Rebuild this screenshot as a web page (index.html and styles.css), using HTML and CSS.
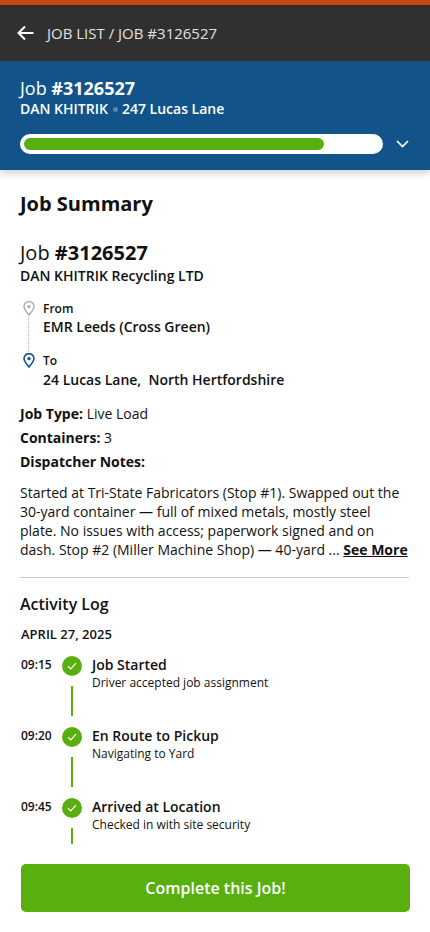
FILE: index.html
```html
<!DOCTYPE html>
<html lang="en">
<head>
<meta charset="utf-8">
<title>Job #3126527</title>
<link rel="stylesheet" href="styles.css">
</head>
<body>
<div class="page">
  <header class="topbar">
    <svg class="back" width="17" height="16" viewBox="0 0 17 16"><path d="M16.5 8H2M8 1.5 1.5 8 8 14.500" fill="none" stroke="#fff" stroke-width="2"/></svg>
    <span class="crumb">JOB LIST / JOB #3126527</span>
  </header>
  <section class="jobbar">
    <div class="jobbar-title">Job <b>#3126527</b></div>
    <div class="jobbar-sub">DAN KHITRIK<span class="dot"></span>247 Lucas Lane</div>
    <div class="progress-row">
      <div class="track"><div class="fill"></div></div>
      <svg class="chev" width="13" height="8" viewBox="0 0 13 8"><path d="M1 1 6.500 6.500 12 1" fill="none" stroke="#fff" stroke-width="1.700"/></svg>
    </div>
  </section>
  <main class="content">
    <h1 class="summary">Job Summary</h1>
    <div class="jobno">Job <b>#3126527</b></div>
    <div class="company">DAN KHITRIK Recycling LTD</div>
    <div class="route">
      <div class="stop">
        <svg class="pin" width="12" height="15" viewBox="0 0 12 15"><path d="M6 14C3.500 10.800 1 8.400 1 5.600A5 5 0 0 1 11 5.600C11 8.400 8.500 10.800 6 14Z" fill="none" stroke="#b5a9b0" stroke-width="1.400"/><circle cx="6" cy="5.600" r="1.600" fill="#b5a9b0"/></svg>
        <div class="stop-label">From</div>
        <div class="stop-name">EMR Leeds (Cross Green)</div>
        <div class="dots"></div>
      </div>
      <div class="stop last">
        <svg class="pin" width="12" height="15" viewBox="0 0 12 15"><path d="M6 14C3.500 10.800 1 8.400 1 5.600A5 5 0 0 1 11 5.600C11 8.400 8.500 10.800 6 14Z" fill="none" stroke="#12548a" stroke-width="1.600"/><circle cx="6" cy="5.600" r="1.700" fill="#12548a"/></svg>
        <div class="stop-label">To</div>
        <div class="stop-name far">24 Lucas Lane,&nbsp; North Hertfordshire</div>
      </div>
    </div>
    <div class="fact"><b>Job Type:</b> Live Load</div>
    <div class="fact"><b>Containers:</b> 3</div>
    <div class="fact"><b>Dispatcher Notes:</b></div>
    <p class="notes">Started at Tri-State Fabricators (Stop #1). Swapped out the 30-yard container — full of mixed metals, mostly steel plate. No issues with access; paperwork signed and on dash. Stop #2 (Miller Machine Shop) — 40-yard ... <a class="more">See More</a></p>
    <hr class="rule">
    <h2 class="log-title">Activity Log</h2>
    <div class="log-date">APRIL 27, 2025</div>
    <div class="log">
      <div class="entry">
        <div class="time">09:15</div>
        <div class="mark">
          <svg class="check" width="20" height="20" viewBox="0 0 20 20"><circle cx="10" cy="10" r="10" fill="#5aaf10"/><path d="M6 10.300 8.800 13 14 7.200" fill="none" stroke="#fff" stroke-width="1.200"/></svg>
          <div class="line"></div>
        </div>
        <div class="body"><div class="ev">Job Started</div><div class="desc">Driver accepted job assignment</div></div>
      </div>
      <div class="entry">
        <div class="time">09:20</div>
        <div class="mark">
          <svg class="check" width="20" height="20" viewBox="0 0 20 20"><circle cx="10" cy="10" r="10" fill="#5aaf10"/><path d="M6 10.300 8.800 13 14 7.200" fill="none" stroke="#fff" stroke-width="1.200"/></svg>
          <div class="line"></div>
        </div>
        <div class="body"><div class="ev">En Route to Pickup</div><div class="desc">Navigating to Yard</div></div>
      </div>
      <div class="entry">
        <div class="time">09:45</div>
        <div class="mark">
          <svg class="check" width="20" height="20" viewBox="0 0 20 20"><circle cx="10" cy="10" r="10" fill="#5aaf10"/><path d="M6 10.300 8.800 13 14 7.200" fill="none" stroke="#fff" stroke-width="1.200"/></svg>
          <div class="line"></div>
        </div>
        <div class="body"><div class="ev">Arrived at Location</div><div class="desc">Checked in with site security</div></div>
      </div>
    </div>
  </main>
  <footer class="footer"><button class="complete">Complete this Job!</button></footer>
</div>
</body>
</html>
```
FILE: styles.css
```css
* { box-sizing: border-box; }
html, body { margin: 0; padding: 0; }
body { font-family: "Open Sans", sans-serif; color: #111; background: #fff; }
.page { width: 430px; height: 932px; display: flex; flex-direction: column; overflow: hidden; }
.topbar { flex: none; height: 61px; background: #303030; border-top: 5px solid #c44a14; display: flex; align-items: center; padding: 0 0 0 17px; gap: 13px; }
.back { flex: none; }
.crumb { color: #e2e2e2; font-size: 15px; }
.jobbar { flex: none; height: 109px; background: #12548a; color: #fff; padding: 15px 20px 0; box-shadow: 0 3px 8px rgba(0,0,0,.2); position: relative; z-index: 1; }
.jobbar-title { font-size: 18px; line-height: 24px; }
.jobbar-title b { font-weight: 700; }
.jobbar-sub { font-size: 14px; line-height: 18px; font-weight: 600; display: flex; align-items: center; }
.dot { width: 5px; height: 5px; border-radius: 50%; background: #5a86ad; margin: 0 4px 0 5px; }
.progress-row { display: flex; align-items: center; margin-top: 16px; gap: 13px; }
.track { width: 363px; height: 20px; background: #fff; border-radius: 10px; padding: 4px; }
.fill { width: 300px; height: 12px; background: #5aaf10; border-radius: 6px; }
.content { flex: 1; min-height: 0; overflow: hidden; padding: 20px 20px 0; }
.summary { margin: 0; font-size: 20px; line-height: 28px; font-weight: 700; }
.jobno { margin-top: 21px; font-size: 20px; line-height: 28px; }
.company { font-size: 14px; line-height: 18px; font-weight: 600; }
.route { margin-top: 15px; padding-left: 3px; }
.stop { position: relative; padding-left: 20px; height: 52px; }
.stop.last { height: 50px; }
.pin { position: absolute; left: 0; top: 1px; }
.stop-label { font-size: 12px; line-height: 17px; font-weight: 600; }
.stop-name { font-size: 14px; line-height: 20px; font-weight: 600; }
.stop-name.far { margin-top: 1px; }
.dots { position: absolute; left: 5px; top: 17px; height: 35px; border-left: 1px dotted #b5a9b0; }
.fact { font-size: 14px; line-height: 24px; }
.fact b { font-weight: 700; }
.notes { margin: 9px 0 0; font-size: 14px; line-height: 19px; }
.more { font-weight: 700; text-decoration: underline; color: #111; }
.rule { margin: 18px 1px 0 0; border: 0; border-top: 1px solid #ccc; }
.log-title { margin: 15px 0 0; font-size: 16px; line-height: 22px; font-weight: 600; }
.log-date { margin: 10px 0 0 1px; font-size: 13px; line-height: 18px; font-weight: 600; }
.log { margin-top: 13px; }
.entry { display: flex; height: 71px; }
.time { width: 40px; padding: 1px 0 0 1px; font-size: 12px; line-height: 16px; font-weight: 600; }
.mark { width: 22px; display: flex; flex-direction: column; align-items: center; margin-left: 1px; }
.check { flex: none; }
.line { width: 2px; height: 30px; margin-top: 10px; background: #5aaf10; flex: none; }
.body { padding-left: 9px; margin-top: -1px; }
.ev { font-size: 14px; line-height: 20px; font-weight: 600; }
.desc { font-size: 12px; line-height: 16px; }
.footer { flex: none; height: 88px; background: #fff; padding: 20px 20px 0 21px; position: relative; }
.complete { width: 100%; height: 48px; border: 0; border-radius: 5px; background: #5aaf10; color: #fff; font-family: "Open Sans", sans-serif; font-size: 16px; font-weight: 600; }
```
